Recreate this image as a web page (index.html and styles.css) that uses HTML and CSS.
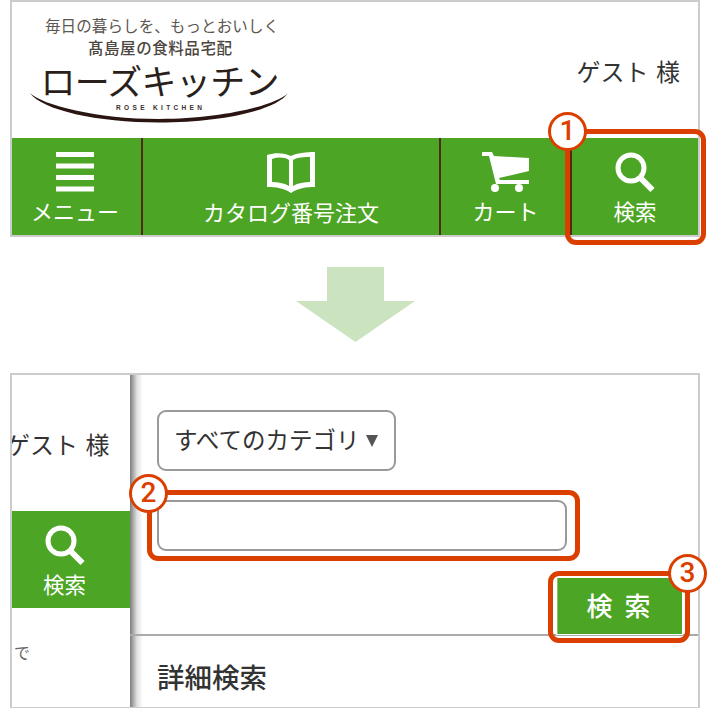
FILE: index.html
```html
<!DOCTYPE html>
<html lang="ja">
<head>
<meta charset="utf-8">
<title>検索の手順</title>
<link rel="stylesheet" href="styles.css">
</head>
<body>
<main class="page">
  <section class="panel panel-top">
    <header class="head">
      <svg class="logo" viewBox="0 0 270 126" width="270" height="126">
        <text class="logo-tag" x="135" y="30" text-anchor="middle" textLength="234">毎日の暮らしを、もっとおいしく</text>
        <text class="logo-sub" x="133" y="52" text-anchor="middle" textLength="144">髙島屋の食料品宅配</text>
        <text class="logo-name" x="133" y="93" text-anchor="middle" textLength="239">ローズキッチン</text>
        <text class="logo-en" x="132" y="108" text-anchor="middle" textLength="86">ROSE KITCHEN</text>
        <path class="logo-swoosh" d="M3 91C15 108 70 120.500 132 120.500C195 120.500 250 108 261 91C250 103 195 117 132 117C70 117 15 103 3 91Z"/>
      </svg>
      <p class="guest">ゲスト 様</p>
    </header>
    <nav class="nav">
      <a class="nav-item nav-menu">
        <svg class="icon" viewBox="0 0 38 40" width="38" height="40"><path d="M0 0h38v5H0zM0 11.500h38v5H0zM0 23h38v5H0zM0 34.500h38v5H0z"/></svg>
        <span>メニュー</span>
      </a>
      <a class="nav-item nav-catalog">
        <svg class="icon" viewBox="0 0 48 41" width="48" height="41"><path fill-rule="evenodd" d="M0 3C9 0 18 1 24 4C30 1 39 0 48 0V35C39 35 31 36 24 41C17 36 9 35 0 35ZM5 7V30C11 30 17 31 22 34V8C17 5 11 5 5 7ZM43 5C37 5 31 5 26 8V34C31 31 37 30 43 30Z"/></svg>
        <span>カタログ番号注文</span>
      </a>
      <a class="nav-item nav-cart">
        <svg class="icon" viewBox="0 0 48 40" width="48" height="40"><path d="M0 0H10L12 4L47 6V19L17 26L18 28H47V32H14L7 4H0Z"/><circle cx="13" cy="36" r="4"/><circle cx="37" cy="36" r="4"/></svg>
        <span>カート</span>
      </a>
      <a class="nav-item nav-search">
        <svg class="icon" viewBox="0 0 40 41" width="40" height="41"><circle class="lens" cx="16" cy="16" r="13"/><path class="handle" d="M25 25.500L37.500 38"/></svg>
        <span>検索</span>
      </a>
    </nav>
  </section>

  <svg class="arrow" viewBox="0 0 119 75" width="119" height="75"><path d="M31 0H88V34H119L59.500 75L0 34H31Z"/></svg>

  <section class="panel panel-bottom">
    <aside class="side">
      <p class="side-guest">ゲスト 様</p>
      <a class="side-search">
        <svg class="icon" viewBox="0 0 40 41" width="40" height="41"><circle class="lens" cx="16" cy="16" r="13"/><path class="handle" d="M25 25.500L37.500 38"/></svg>
        <span>検索</span>
      </a>
      <p class="side-note">で</p>
    </aside>
    <div class="drawer">
      <div class="form">
        <div class="select"><span>すべてのカテゴリ</span><i class="caret"></i></div>
        <div class="input"></div>
        <button class="submit" type="button">検 索</button>
      </div>
      <h2 class="detail">詳細検索</h2>
    </div>
  </section>
</main>

<div class="mark mark-1"></div>
<div class="badge badge-1">1</div>
<div class="mark mark-2"></div>
<div class="badge badge-2">2</div>
<div class="mark mark-3"></div>
<div class="badge badge-3">3</div>
</body>
</html>
```

FILE: styles.css
```css
* { box-sizing: border-box; }
html, body { margin: 0; padding: 0; background: #fff; }
body {
  position: relative;
  width: 710px;
  height: 708px;
  overflow: hidden;
  font-family: "Noto Sans CJK JP", "Noto Sans", sans-serif;
  color: #333;
}
p, h2 { margin: 0; }

.page { display: flex; flex-direction: column; align-items: center; }

.panel {
  width: 690px;
  border: 2px solid #ccc;
  background: #fff;
}
.panel-top { height: 237px; display: flex; flex-direction: column; }
.head {
  height: 136px;
  display: flex;
  justify-content: space-between;
  align-items: flex-start;
  padding: 0 18px 0 15px;
}
.logo { display: block; }
.logo-tag { font-size: 15.500px; fill: #5c5650; }
.logo-sub { font-size: 15.500px; font-weight: 500; fill: #4c4640; }
.logo-name { font-size: 35px; fill: #2a1f1a; }
.logo-en { font-size: 6.500px; font-weight: 700; font-family: "Liberation Sans", sans-serif; fill: #3a2f2a; }
.logo-swoosh { fill: #2a1512; }
.guest { font-size: 24px; line-height: 34px; margin-top: 52px; word-spacing: 2px; color: #333; }

.nav { flex: 1; display: flex; background: #4da525; }
.nav-item {
  display: flex;
  flex-direction: column;
  align-items: center;
  padding-top: 14px;
  color: #fff;
  border-right: 2px solid #4f2b14;
}
.nav-item span { font-size: 22px; line-height: 30px; margin-top: 3px; white-space: nowrap; }
.nav-menu { width: 131px; padding-right: 3px; }
.nav-catalog { width: 298px; }
.nav-cart { width: 131px; }
.nav-search { flex: 1; border-right: 0; }
.nav-search span { font-size: 21.500px; }
.icon { display: block; fill: #fff; }
.lens, .handle { fill: none; stroke: #fff; }
.lens { stroke-width: 5px; }
.handle { stroke-width: 6px; }

.arrow { display: block; margin: 30px 0 31px; fill: #cbe4bf; }

.panel-bottom { height: 336px; display: flex; }
.side { width: 118px; flex: none; overflow: hidden; display: flex; flex-direction: column; }
.side-guest {
  font-size: 24px;
  line-height: 34px;
  margin-top: 52px;
  margin-left: -6px;
  word-spacing: 2px;
  white-space: nowrap;
}
.side-search {
  margin-top: 50px;
  height: 97px;
  background: #4da525;
  color: #fff;
  display: flex;
  flex-direction: column;
  align-items: center;
  padding: 14px 13px 0 0;
}
.side-search span { font-size: 21.500px; line-height: 30px; margin-top: 3px; }
.side-note { font-size: 16px; line-height: 24px; margin: 32px 0 0 2px; color: #666; }

.drawer {
  flex: 1;
  background: linear-gradient(to right, #7c7c7c 0, #a8a8a8 3px, #e0e0e0 7px, #fff 13px);
  display: flex;
  flex-direction: column;
}
.form {
  height: 261px;
  padding: 35px 0 0 27px;
  border-bottom: 2px solid #aaa;
  display: flex;
  flex-direction: column;
  align-items: flex-start;
}
.select {
  width: 239px;
  height: 61px;
  border: 2px solid #999;
  border-radius: 9px;
  background: #fff;
  display: flex;
  align-items: center;
  padding: 0 0 4px 15px;
  font-size: 23.500px;
  color: #333;
  white-space: nowrap;
}
.caret {
  margin: 4px 0 0 7px;
  width: 0;
  height: 0;
  border-left: 6.500px solid transparent;
  border-right: 6.500px solid transparent;
  border-top: 12px solid #555;
}
.input {
  width: 410px;
  height: 51px;
  margin-top: 29px;
  border: 2px solid #999;
  border-radius: 9px;
  background: #fff;
}
.submit {
  width: 125px;
  height: 56px;
  margin: 27px 0 0 400px;
  padding: 0 0 4px;
  border: 0;
  border-left: 1px solid #8cc46e;
  background: #4da525;
  color: #fff;
  font-family: inherit;
  font-size: 26px;
  font-weight: 500;
  letter-spacing: 3px;
  box-shadow: 0 0 0 1px #fff;
}
.detail {
  margin: 22px 0 0 27px;
  font-size: 27.500px;
  line-height: 36px;
  font-weight: 500;
  color: #333;
}

.mark {
  position: absolute;
  border: 5px solid #db3f00;
  border-radius: 11px;
}
.mark-1 { left: 565px; top: 129px; width: 141px; height: 116px; }
.mark-2 { left: 147px; top: 490px; width: 433px; height: 71px; }
.mark-3 { left: 548px; top: 571px; width: 142px; height: 72px; }

.badge {
  position: absolute;
  width: 39px;
  height: 39px;
  border: 3.500px solid #db3f00;
  border-radius: 50%;
  background: #fff;
  color: #db3f00;
  font-family: "Roboto", sans-serif;
  font-size: 28px;
  font-weight: 500;
  line-height: 31px;
  text-align: center;
}
.badge-1 { left: 548px; top: 112px; }
.badge-2 { left: 129px; top: 474px; }
.badge-3 { left: 668px; top: 554px; }
```
